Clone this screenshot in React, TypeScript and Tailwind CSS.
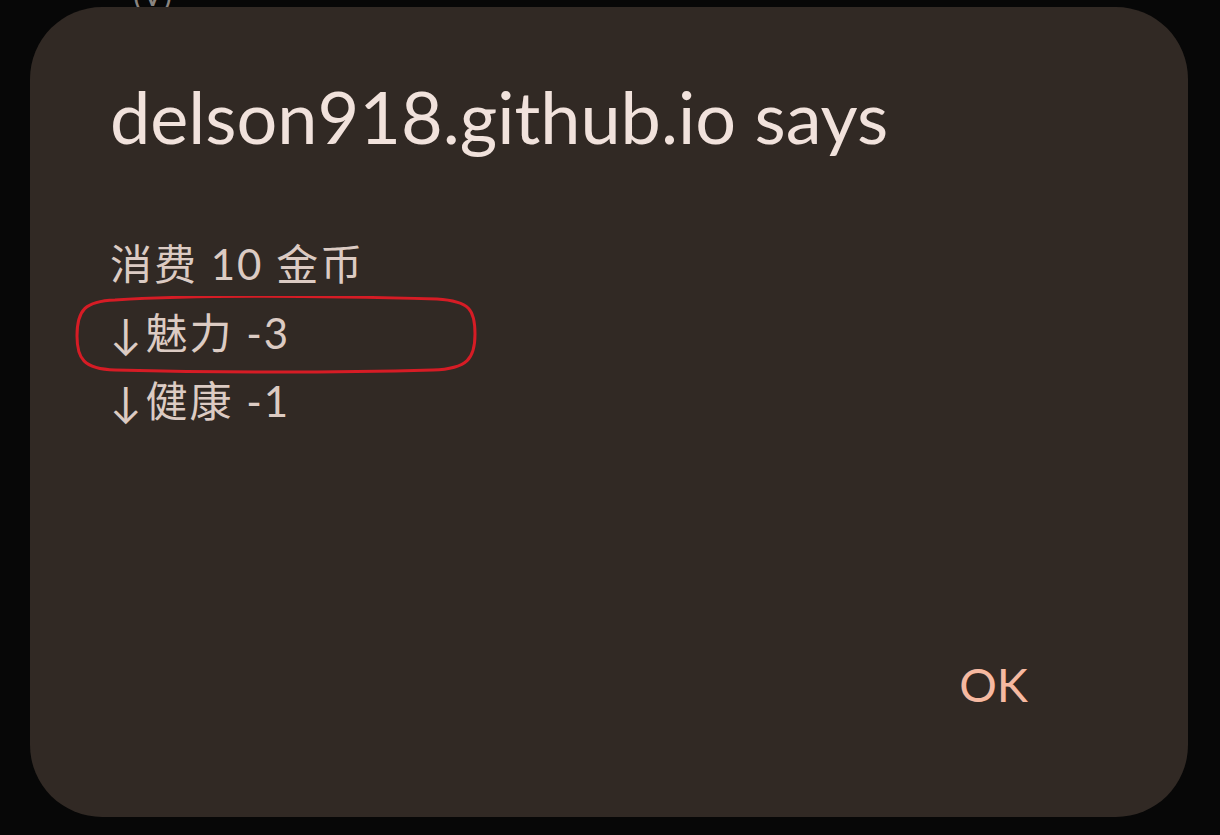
export default function App() {
  return (
    <div className="relative h-[835px] w-[1220px] overflow-hidden bg-[#070707]">
      {/* page behind the dialog, barely visible */}
      <div className="absolute left-[133px] top-[-22px] text-[32px] leading-none text-[#8a8480] [font-family:Lato,sans-serif]">
        (V)
      </div>

      <div className="flex h-full w-full items-start pl-[30px] pt-[7px]">
        <div className="relative flex h-[810px] w-[1158px] flex-col rounded-[72px] bg-[#312924] pl-[80px] pr-[160px] pt-[67px] pb-[109px] [font-family:Lato,'Noto_Sans_CJK_SC',sans-serif]">
          <h1 className="text-[72px] leading-[84px] text-[#f1e2dc]">
            delson918.github.io says
          </h1>

          <div className="mt-[72px] flex flex-col text-[42px] leading-[68.5px] text-[#dccbc3]">
            <div className="tracking-[2px]">消费 10 金币</div>
            <div className="relative">
              <span className="mr-[4px]">↓</span>
              <span className="tracking-[2px]">魅力 -3</span>
              <svg
                className="absolute left-[-35px] top-[-3px]"
                width="404"
                height="78"
                viewBox="0 0 404 78"
                fill="none"
              >
                <path
                  d="M40 4 C120 -1 250 0 362 3 C395 5 400 14 400 38 C400 62 393 73 358 74 C250 77 120 76 40 74 C8 73 2 62 2 40 C2 14 10 5 40 4 Z"
                  stroke="#d61c25"
                  strokeWidth="3"
                />
              </svg>
            </div>
            <div>
              <span className="mr-[4px]">↓</span>
              <span className="tracking-[2px]">健康 -1</span>
            </div>
          </div>

          <div className="flex-1" />

          <div className="flex justify-end">
            <button className="text-[47px] leading-none text-[#f6b9a1]">OK</button>
          </div>
        </div>
      </div>
    </div>
  )
}
